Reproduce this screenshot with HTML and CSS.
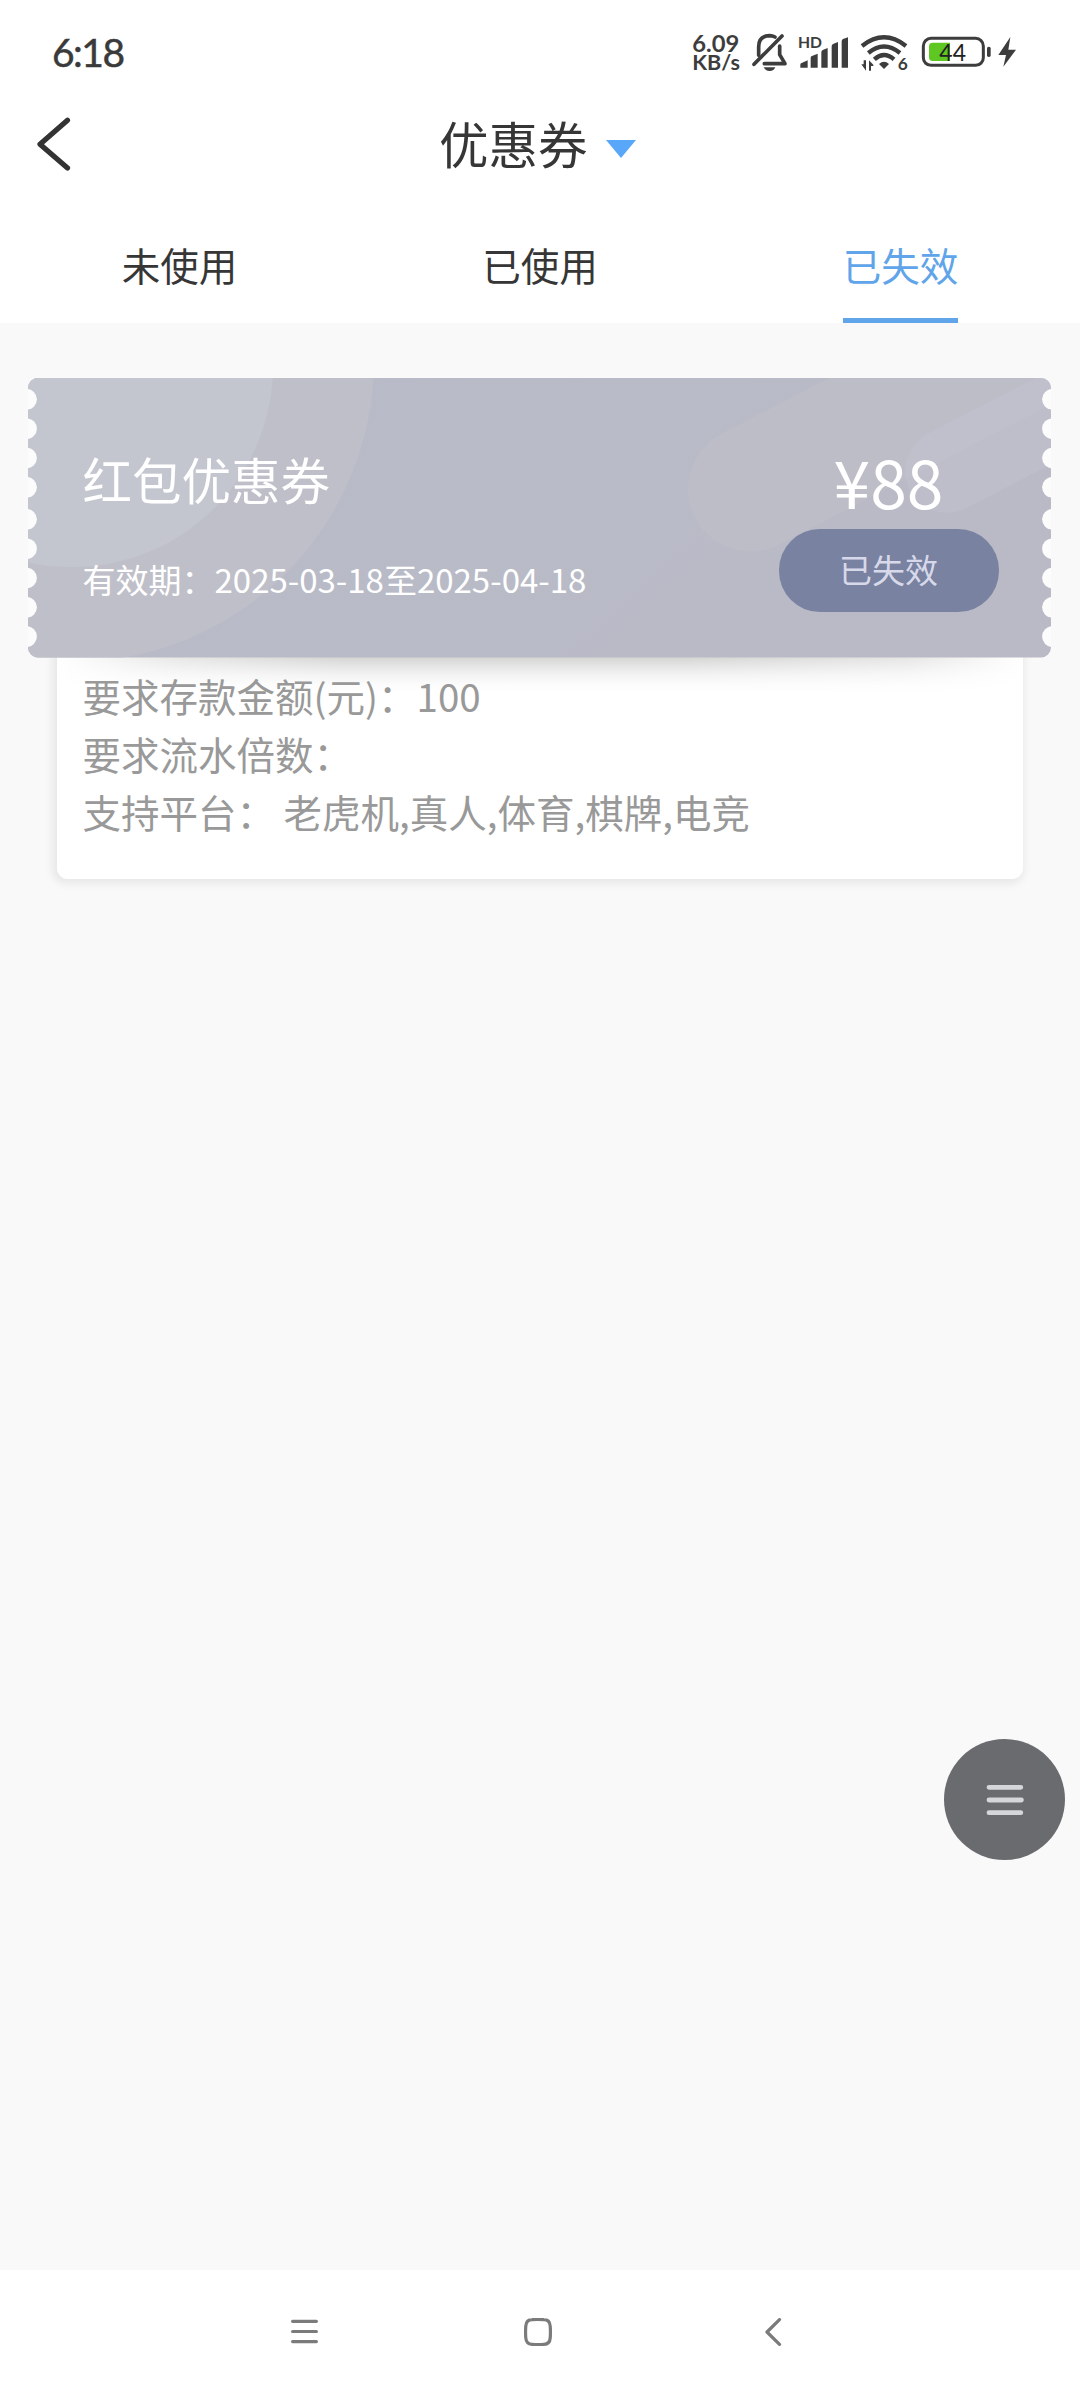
FILE: index.html
```html
<!DOCTYPE html>
<html lang="zh-CN">
<head>
<meta charset="utf-8">
<title>优惠券</title>
<link rel="stylesheet" href="styles.css">
</head>
<body>
<header class="top">
  <div class="status">
    <span class="clock">6:18</span>
    <svg class="status-icons" viewBox="0 0 1080 210">
      <g class="ink-text">
        <text x="37" y="96" font-size="66" font-weight="700" textLength="141" lengthAdjust="spacingAndGlyphs">6.09</text>
        <text x="37" y="150" font-size="60" font-weight="700" textLength="143" lengthAdjust="spacingAndGlyphs">KB/s</text>
        <text x="354" y="84" font-size="48" font-weight="700" textLength="72" lengthAdjust="spacingAndGlyphs">HD</text>
        <text x="653" y="150" font-size="52" font-weight="700">6</text>
      </g>
      <g fill="none" stroke="#3d3d3d" stroke-width="11" stroke-linecap="round" stroke-linejoin="round">
        <path d="M222 133 306 48"/>
        <path d="M236 106V80Q236 48 268 47Q278 47 285 51"/>
        <path d="M299 78V104L315 131H253"/>
      </g>
      <path fill="#3d3d3d" d="M251 142h35q-4 11-17 11t-18-11z"/>
      <g fill="#3d3d3d">
        <path d="M361 143v-9q0-4 4-5l18-8v22zM392 143v-30q0-4 4-5l17-7v42zM424 143v-46q0-5 4-7l15-6v59zM455 143V79q0-5 4-7l15-6v77zM485 143V64q0-5 4-7l15-5v91z"/>
        <path d="M612 147l-15-15q15-13 30 0z"/>
        <path d="M544 133h7v-12h7v31zM567 152v-31l13 13v4h-7v14z"/>
      </g>
      <g fill="none" stroke="#3d3d3d" stroke-width="13">
        <path d="M546 78Q612 26 678 78"/>
        <path d="M565 99Q612 60 660 99"/>
        <path d="M583 118Q612 92 642 118"/>
      </g>
      <rect x="730" y="55" width="180" height="81" rx="23" fill="none" stroke="#3d3d3d" stroke-width="9"/>
      <path fill="#5fc721" d="M758 68h52v55h-52q-11 0-11-11V79q0-11 11-11z"/>
      <rect x="921" y="80" width="11" height="31" rx="5" fill="#3d3d3d"/>
      <text class="battery-level" x="778" y="122" font-size="70" textLength="80" lengthAdjust="spacingAndGlyphs">44</text>
      <path fill="#3d3d3d" d="M991 51 955 105H978L970 140 1008 89H985z"/>
    </svg>
  </div>
  <div class="titlebar">
    <svg class="back" viewBox="0 0 36 56"><path d="M31.5 4.2 4 28.3 31.5 52"/></svg>
    <h1 class="title">优惠券</h1>
    <svg class="caret" viewBox="0 0 30 18"><path d="M0 0H30L15 18z"/></svg>
  </div>
  <nav class="tabs">
    <span class="tab">未使用</span>
    <span class="tab">已使用</span>
    <span class="tab tab-active">已失效</span>
  </nav>
</header>
<main class="content">
  <section class="coupon">
    <svg class="coupon-bg" viewBox="28 378 1023 280">
      <defs>
        <linearGradient id="base" x1="0" x2="1" y1="0" y2=".3"><stop offset="0" stop-color="#b8bbc8"/><stop offset="1" stop-color="#b9bac6"/></linearGradient>
        <clipPath id="shape"><rect x="28" y="378" width="1023" height="279.5" rx="10"/></clipPath>
      </defs>
      <g clip-path="url(#shape)">
        <rect x="28" y="378" width="1023" height="280" fill="url(#base)"/>
        <circle cx="72" cy="360" r="302" fill="#bfbfc9"/>
        <circle cx="72" cy="366" r="201" fill="#c4c6cf"/>
        <path d="M750.5 489 1130 293" fill="none" stroke="#c4c1ca" stroke-opacity=".42" stroke-width="125" stroke-linecap="round"/>
        <path d="M947 471 1200 340" fill="none" stroke="#c4c2d0" stroke-opacity=".5" stroke-width="84" stroke-linecap="round"/>
        <g fill="#fcfcfc">
          <circle cx="26.5" cy="399.3" r="10.4"/><circle cx="26.5" cy="428.7" r="10.4"/><circle cx="26.5" cy="458" r="10.4"/><circle cx="26.5" cy="487.3" r="10.4"/><circle cx="26.5" cy="519.3" r="10.4"/><circle cx="26.5" cy="548.7" r="10.4"/><circle cx="26.5" cy="578" r="10.4"/><circle cx="26.5" cy="607.3" r="10.4"/><circle cx="26.5" cy="636.6" r="10.4"/>
          <circle cx="1052.5" cy="399.3" r="10.4"/><circle cx="1052.5" cy="428.7" r="10.4"/><circle cx="1052.5" cy="458" r="10.4"/><circle cx="1052.5" cy="487.3" r="10.4"/><circle cx="1052.5" cy="519.3" r="10.4"/><circle cx="1052.5" cy="548.7" r="10.4"/><circle cx="1052.5" cy="578" r="10.4"/><circle cx="1052.5" cy="607.3" r="10.4"/><circle cx="1052.5" cy="636.6" r="10.4"/>
        </g>
      </g>
    </svg>
    <div class="coupon-info">
      <h2 class="coupon-name">红包优惠券</h2>
      <p class="coupon-date">有效期：2025-03-18至2025-04-18</p>
    </div>
    <div class="coupon-side">
      <span class="price">¥88</span>
      <span class="state">已失效</span>
    </div>
  </section>
  <section class="details">
    <p>要求存款金额(元)：100</p>
    <p>要求流水倍数：</p>
    <p>支持平台： 老虎机,真人,体育,棋牌,电竞</p>
  </section>
</main>
<footer class="sysnav">
  <svg class="nav-menu" viewBox="0 0 28 28"><path d="M1.6 3.3H25.4M1.6 13.5H25.4M1.6 23.6H25.4"/></svg>
  <svg class="nav-home" viewBox="0 0 28 28"><path d="M8 1.7Q14 1.2 20 1.7Q25.8 1.9 26.2 8Q26.7 14 26.2 20Q25.8 26 20 26.3Q14 26.8 8 26.3Q2.2 26 1.8 20Q1.3 14 1.8 8Q2.2 1.9 8 1.7z"/></svg>
  <svg class="nav-back" viewBox="0 0 18 28"><path d="M15.5 1.6 3 14 15.5 26.4"/></svg>
</footer>
<div class="fab">
  <svg viewBox="0 0 40 32"><path d="M4 3.3H35.8M4 16H36.4M4 28.7H35.8"/></svg>
</div>
</body>
</html>
```
FILE: styles.css
```css
* { box-sizing: border-box; margin: 0; padding: 0; }

body {
  width: 1080px;
  height: 2400px;
  display: flex;
  flex-direction: column;
  position: relative;
  background: #f9f9f9;
  color: #363636;
  font-family: "Noto Sans CJK SC", sans-serif;
  font-weight: 400;
  overflow: hidden;
}

svg { display: block; }

.top { height: 323px; background: #fff; }

.status {
  height: 98px;
  padding: 20px 40px 0 52px;
  display: flex;
  justify-content: space-between;
}

.clock {
  font: 400 39px/65px Lato, sans-serif;
  letter-spacing: -1.5px;
  color: #3a3a3a;
  -webkit-text-stroke: .5px #3a3a3a;
}

.status-icons { width: 360px; height: 70px; }
.ink-text { fill: #3d3d3d; font-family: Lato, sans-serif; }
.battery-level { fill: #222; font-family: Lato, sans-serif; font-weight: 400; }

.titlebar {
  height: 89px;
  padding-left: 36px;
  display: flex;
  align-items: center;
}

.back { width: 36px; height: 56px; margin-top: 3px; }
.back path { fill: none; stroke: #333; stroke-width: 5.2; stroke-linecap: round; stroke-linejoin: round; }
.title { margin-left: 367px; font-size: 49.5px; line-height: 90px; font-weight: inherit; }
.caret { width: 30px; height: 18px; margin: 13px 0 0 18px; }
.caret path { fill: #58a7f8; }

.tabs { height: 136px; display: grid; grid-template-columns: 359px 362px 359px; justify-items: center; }
.tab { height: 136px; padding-top: 48px; font-size: 38.5px; line-height: 58px; border-bottom: 5px solid transparent; }
.tab-active { color: #60a4e9; border-color: #60a4e9; }

.content { height: 1947px; padding: 55px 29px 0 28px; }

.coupon {
  height: 280px;
  display: grid;
  grid-template-columns: 1fr 220px;
  padding: 0 52px 0 54.5px;
  position: relative;
  z-index: 1;
  color: #fff;
}

.coupon-bg { position: absolute; inset: 0; width: 1023px; height: 280px; z-index: -1; }
.coupon-name { margin-top: 66px; font-size: 49.5px; line-height: 70px; font-weight: inherit; }
.coupon-date { margin-top: 40px; font-size: 33px; line-height: 50px; }

.coupon-side { display: flex; flex-direction: column; align-items: center; padding-top: 52px; }
.price { margin-left: -1px; font-size: 66px; line-height: 100px; }
.state {
  width: 220px;
  height: 83px;
  margin-top: -1px;
  padding-right: 1px;
  border-radius: 41px;
  background: #7982a0;
  color: #d7d9ea;
  font-size: 33px;
  line-height: 80px;
  text-align: center;
}

.details {
  height: 236px;
  margin: -15px 28px 0 29px;
  padding: 23px 25.5px 0;
  border-radius: 11px;
  color: #999;
  font-size: 38.5px;
  line-height: 58px;
  background:
    linear-gradient(90deg, #fff 0, rgba(255, 255, 255, .45) 12%, rgba(255, 255, 255, 0) 30%, rgba(255, 255, 255, 0) 65%, rgba(255, 255, 255, .4) 88%, #fff 100%),
    linear-gradient(#d6d6d5 15px, #e3e3e3 22px, #f3f3f3 32px, #fcfcfc 42px, #fff 50px);
  box-shadow: -2px 2px 8px 3px rgba(0, 0, 0, .07);
}

.sysnav {
  height: 130px;
  background: #fff;
  padding: 48px 0 0 291px;
  display: flex;
}

.sysnav svg { height: 28px; }
.sysnav path { fill: none; stroke: #7b7b7b; stroke-width: 3.2; stroke-linecap: round; stroke-linejoin: round; }
.nav-menu, .nav-home { width: 28px; }
.nav-home { margin: 0 212px 0 205px; }
.nav-back { width: 18px; }

.fab {
  position: absolute;
  left: 944px;
  top: 1739px;
  width: 121px;
  height: 121px;
  border-radius: 50%;
  background: #6a6b6e;
  display: grid;
  place-items: center;
}

.fab svg { width: 40px; height: 32px; }
.fab path { fill: none; stroke: #d5d6d9; stroke-width: 4.8; stroke-linecap: round; }
```
